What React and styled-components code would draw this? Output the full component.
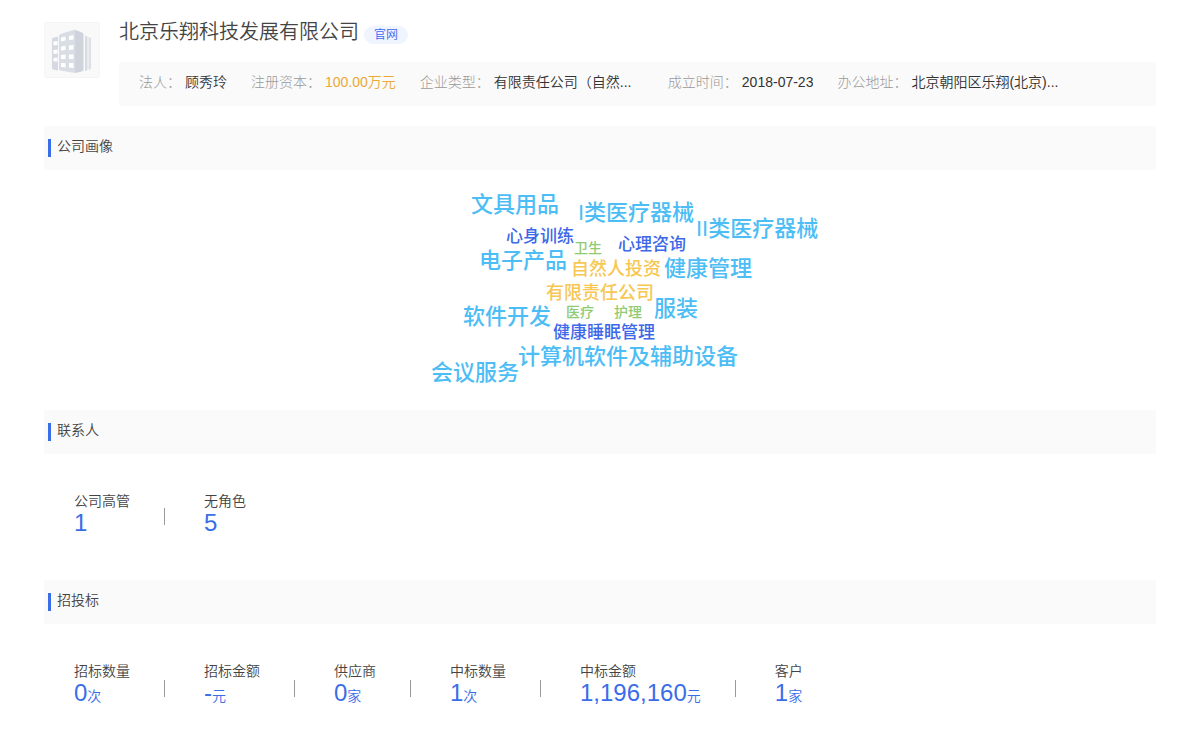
import React from 'react'
import styled, { createGlobalStyle } from 'styled-components'

const GlobalStyle = createGlobalStyle`
  * {
    box-sizing: border-box;
  }

  body {
    margin: 0;
    background: #fff;
    color: #444;
    font-family: "Liberation Sans", "Noto Sans CJK SC", sans-serif;
    font-size: 14px;
    font-weight: 350;
    line-height: 20px;
  }
`

const Page = styled.main`
  padding: 20px 44px;
`

const Header = styled.header`
  display: flex;
  align-items: flex-start;
  gap: 19px;
  margin-bottom: 20px;
`

const Logo = styled.svg`
  flex: none;
  width: 56px;
  height: 56px;
  margin-top: 2px;
`

const Company = styled.div`
  flex: 1;
  min-width: 0;
`

const TitleRow = styled.div`
  display: flex;
  align-items: flex-start;
  gap: 5px;
  margin-bottom: 18px;
`

const Title = styled.h1`
  margin: 0;
  font-size: 20px;
  font-weight: 350;
  line-height: 24px;
`

const SiteLink = styled.a`
  margin-top: 6px;
  padding: 0 10px;
  border-radius: 9px;
  background: #eff4fe;
  color: #3a6bf0;
  font-size: 12px;
  line-height: 18px;
  text-decoration: none;
`

const InfoBar = styled.dl`
  display: flex;
  flex-wrap: wrap;
  gap: 4px 24px;
  margin: 0;
  padding: 10px 20px 14px;
  background: #fafafa;
`

const InfoItem = styled.div`
  display: flex;
  gap: 4px;
`

const InfoLabel = styled.dt`
  color: #999;
  font-weight: 300;
`

const InfoValue = styled.dd`
  width: ${props => (props.$wide ? '150px' : 'auto')};
  margin: 0;
  overflow: hidden;
  white-space: nowrap;
  color: ${props => props.$color || '#333'};
`

const SectionTitle = styled.h2`
  display: flex;
  align-items: flex-start;
  gap: 6px;
  margin: 0;
  padding: 10px 4px 13px;
  background: #fafafa;
  font-size: 14px;
  font-weight: 350;
  line-height: 20px;

  &::before {
    content: "";
    width: 3px;
    height: 18px;
    margin-top: 3px;
    background: #3a6de8;
  }
`

const Cloud = styled.div`
  position: relative;
  width: 400px;
  height: 240px;
  margin: 0 auto;
`

const tones = {
  sky: { size: 22, color: '#4dbdf5' },
  blue: { size: 17, color: '#3d68e8' },
  amber: { size: 18, color: '#f7c752' },
  green: { size: 14, color: '#8fcb74' }
}

const Word = styled.span`
  position: absolute;
  left: ${props => props.$x}px;
  top: ${props => props.$y}px;
  color: ${props => tones[props.$tone].color};
  font-size: ${props => tones[props.$tone].size}px;
  font-weight: 500;
  line-height: 24px;
  white-space: nowrap;
`

const Stats = styled.dl`
  display: flex;
  flex-wrap: wrap;
  margin: 0;
  padding: 37px 30px 45px;
`

const Stat = styled.div`
  display: flex;
  align-items: center;

  & + &::before {
    content: "";
    width: 1px;
    height: 17px;
    margin: 7px 39px 0 34px;
    background: #999;
  }
`

const StatLabel = styled.dt`
  line-height: 20px;
`

const StatValue = styled.dd`
  margin: 0;
  color: #3a6de8;
  font-size: 24px;
  line-height: 24px;
`

const Unit = styled.span`
  font-size: 14px;
`

const info = [
  { label: '法人', value: '顾秀玲' },
  { label: '注册资本', value: '100.00万元', color: '#eba938' },
  { label: '企业类型', value: '有限责任公司（自然...', wide: true },
  { label: '成立时间', value: '2018-07-23' },
  { label: '办公地址', value: '北京朝阳区乐翔(北京)...', wide: true }
]

const words = [
  { text: '文具用品', tone: 'sky', x: 71, y: 23 },
  { text: 'I类医疗器械', tone: 'sky', x: 178, y: 31 },
  { text: 'II类医疗器械', tone: 'sky', x: 296, y: 47 },
  { text: '心身训练', tone: 'blue', x: 106, y: 55 },
  { text: '卫生', tone: 'green', x: 174, y: 66 },
  { text: '心理咨询', tone: 'blue', x: 218, y: 63 },
  { text: '电子产品', tone: 'sky', x: 79, y: 79 },
  { text: '自然人投资', tone: 'amber', x: 171, y: 87 },
  { text: '健康管理', tone: 'sky', x: 264, y: 87 },
  { text: '有限责任公司', tone: 'amber', x: 146, y: 111 },
  { text: '软件开发', tone: 'sky', x: 63, y: 135 },
  { text: '医疗', tone: 'green', x: 166, y: 130 },
  { text: '护理', tone: 'green', x: 214, y: 130 },
  { text: '服装', tone: 'sky', x: 254, y: 127 },
  { text: '健康睡眠管理', tone: 'blue', x: 153, y: 151 },
  { text: '计算机软件及辅助设备', tone: 'sky', x: 118, y: 175 },
  { text: '会议服务', tone: 'sky', x: 31, y: 191 }
]

const contacts = [
  { label: '公司高管', value: '1' },
  { label: '无角色', value: '5' }
]

const bids = [
  { label: '招标数量', value: '0', unit: '次' },
  { label: '招标金额', value: '-', unit: '元' },
  { label: '供应商', value: '0', unit: '家' },
  { label: '中标数量', value: '1', unit: '次' },
  { label: '中标金额', value: '1,196,160', unit: '元' },
  { label: '客户', value: '1', unit: '家' }
]

const BuildingLogo = () => (
  <Logo viewBox="0 0 56 56" aria-hidden="true">
    <rect x="0.5" y="0.5" width="55" height="55" rx="2" fill="#f9f9fa" stroke="#f4f5f6" />
    <path d="M8 17q0-1 1-1.200l5-1.300v34l-5-1q-1-0.300-1-1.500z" fill="#d5d9e1" />
    <path d="M15 14q0-1.500 1.500-2l13-4q1.500-0.500 1.500 0v43l-14.500-2.500q-1.500-0.300-1.500-1.500z" fill="#d9dde4" />
    <path d="M31 7.800l7 2.700q1.500 0.500 1.500 2v35q0 1.500-1.500 2l-7 1.500z" fill="#ced3dc" />
    <path d="M41 13.500l2.500 1v33.500l-2.500 1z" fill="#d7dbe2" />
    <path d="M44.500 15l2.500 1v31l-2.500 1z" fill="#dde0e6" />
    <g fill="#fff">
      <path d="M9.500 19.500l4-0.500v4l-4 0.500zM9.500 28l4-0.500v4l-4 0.500zM9.500 36l4-0.500v4h-4z" />
      <path d="M17 15.500l4.500-1v4l-4.500 1zM25 14l4.500-1v4.500l-4.500 0.500zM17 24.500l4.500-0.500v4l-4.500 0.500zM25 23.500l4.500-0.500v4.500l-4.500 0.500zM17 33l4.500-0.500v4.500h-4.500zM25 32.500h4.500v4.500h-4.500zM17 41h4.500v4.500l-4.500-0.500zM25 41h4.500v5l-4.500-0.500z" />
    </g>
  </Logo>
)

const StatList = props => (
  <Stats>
    {props.items.map(item => (
      <Stat key={item.label}>
        <div>
          <StatLabel>{item.label}</StatLabel>
          <StatValue>
            {item.value}
            {item.unit && <Unit>{item.unit}</Unit>}
          </StatValue>
        </div>
      </Stat>
    ))}
  </Stats>
)

const App = () => (
  <Page>
    <GlobalStyle />
    <Header>
      <BuildingLogo />
      <Company>
        <TitleRow>
          <Title>北京乐翔科技发展有限公司</Title>
          <SiteLink href="#">官网</SiteLink>
        </TitleRow>
        <InfoBar>
          {info.map(item => (
            <InfoItem key={item.label}>
              <InfoLabel>{item.label}：</InfoLabel>
              <InfoValue $color={item.color} $wide={item.wide}>{item.value}</InfoValue>
            </InfoItem>
          ))}
        </InfoBar>
      </Company>
    </Header>
    <section>
      <SectionTitle>公司画像</SectionTitle>
      <Cloud>
        {words.map(word => (
          <Word key={word.text} $tone={word.tone} $x={word.x} $y={word.y}>{word.text}</Word>
        ))}
      </Cloud>
    </section>
    <section>
      <SectionTitle>联系人</SectionTitle>
      <StatList items={contacts} />
    </section>
    <section>
      <SectionTitle>招投标</SectionTitle>
      <StatList items={bids} />
    </section>
  </Page>
)

export default App
